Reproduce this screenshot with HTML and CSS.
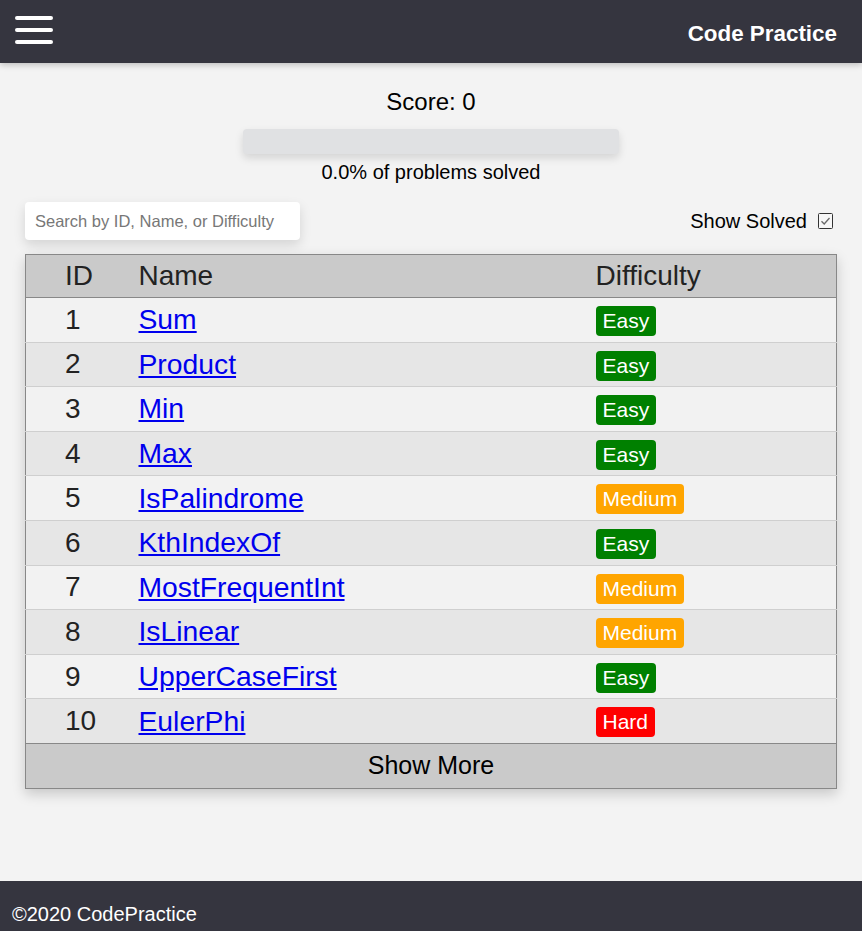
FILE: index.html
```html
<!DOCTYPE html>
<html lang="en">
<head>
<meta charset="utf-8">
<title>Code Practice</title>
<link rel="stylesheet" href="styles.css">
</head>
<body>
<div class="page">
  <header class="topbar">
    <button class="menu" aria-label="Menu">
      <span class="bar"></span><span class="bar"></span><span class="bar"></span>
    </button>
    <div class="brand">Code Practice</div>
  </header>
  <main class="main">
    <div class="score">Score: 0</div>
    <div class="progress"></div>
    <div class="percent">0.0% of problems solved</div>
    <div class="controls">
      <input class="search" type="text" placeholder="Search by ID, Name, or Difficulty">
      <label class="solved">Show Solved
        <svg class="check" width="15" height="16" viewBox="0 0 15 16"><rect x="0.5" y="0.5" width="14" height="15" rx="1" fill="#f7f7f7" stroke="#333" stroke-width="1"/><path d="M3.5 8.2 L6.2 11 L11.5 5" fill="none" stroke="#6a6a6a" stroke-width="1.3"/></svg>
      </label>
    </div>
    <table class="problems">
      <thead>
        <tr><th class="c-id">ID</th><th class="c-name">Name</th><th class="c-diff">Difficulty</th></tr>
      </thead>
      <tbody>
        <tr><td class="c-id">1</td><td class="c-name"><a href="#">Sum</a></td><td class="c-diff"><span class="badge easy">Easy</span></td></tr>
        <tr><td class="c-id">2</td><td class="c-name"><a href="#">Product</a></td><td class="c-diff"><span class="badge easy">Easy</span></td></tr>
        <tr><td class="c-id">3</td><td class="c-name"><a href="#">Min</a></td><td class="c-diff"><span class="badge easy">Easy</span></td></tr>
        <tr><td class="c-id">4</td><td class="c-name"><a href="#">Max</a></td><td class="c-diff"><span class="badge easy">Easy</span></td></tr>
        <tr><td class="c-id">5</td><td class="c-name"><a href="#">IsPalindrome</a></td><td class="c-diff"><span class="badge medium">Medium</span></td></tr>
        <tr><td class="c-id">6</td><td class="c-name"><a href="#">KthIndexOf</a></td><td class="c-diff"><span class="badge easy">Easy</span></td></tr>
        <tr><td class="c-id">7</td><td class="c-name"><a href="#">MostFrequentInt</a></td><td class="c-diff"><span class="badge medium">Medium</span></td></tr>
        <tr><td class="c-id">8</td><td class="c-name"><a href="#">IsLinear</a></td><td class="c-diff"><span class="badge medium">Medium</span></td></tr>
        <tr><td class="c-id">9</td><td class="c-name"><a href="#">UpperCaseFirst</a></td><td class="c-diff"><span class="badge easy">Easy</span></td></tr>
        <tr><td class="c-id">10</td><td class="c-name"><a href="#">EulerPhi</a></td><td class="c-diff"><span class="badge hard">Hard</span></td></tr>
      </tbody>
      <tfoot>
        <tr><td class="more" colspan="3">Show More</td></tr>
      </tfoot>
    </table>
  </main>
  <footer class="footer">©2020 CodePractice</footer>
</div>
</body>
</html>
```
FILE: styles.css
```css
* { box-sizing: border-box; }
html, body { margin: 0; padding: 0; }
body {
  background: #f3f3f3;
  font-family: "Liberation Sans", Arial, sans-serif;
  color: #000;
}
.page {
  min-height: 100vh;
  display: flex;
  flex-direction: column;
}
.topbar {
  height: 63px;
  background: #35353f;
  display: flex;
  align-items: center;
  justify-content: space-between;
  padding: 0 25px 0 15px;
  box-shadow: 0 2px 6px rgba(0,0,0,0.22);
  position: relative;
  z-index: 1;
}
.menu {
  background: none;
  border: 0;
  padding: 0;
  width: 38px;
  display: flex;
  flex-direction: column;
  gap: 8px;
  margin-top: -4px;
}
.bar {
  display: block;
  height: 4px;
  width: 38px;
  border-radius: 2px;
  background: #fff;
}
.brand {
  color: #fff;
  font-weight: bold;
  font-size: 22.4px;
  margin-top: 4px;
}
.main {
  flex: 1;
  padding: 25px 25px 80px;
  display: flex;
  flex-direction: column;
  align-items: center;
}
.score {
  font-size: 24px;
  line-height: 28px;
  height: 28px;
}
.progress {
  margin-top: 13px;
  width: 376px;
  height: 25px;
  background: #e0e1e3;
  border-radius: 4px;
  box-shadow: 0 4px 8px rgba(0,0,0,0.13);
}
.percent {
  margin-top: 7px;
  font-size: 20px;
  line-height: 23px;
}
.controls {
  margin-top: 18px;
  width: 100%;
  display: flex;
  justify-content: space-between;
  align-items: center;
}
.search {
  width: 275px;
  height: 38px;
  border: 0;
  border-radius: 4px;
  background: #fff;
  padding: 0 10px;
  font-family: "Liberation Sans", Arial, sans-serif;
  font-size: 16.5px;
  box-shadow: 0 5px 12px rgba(0,0,0,0.13);
  outline: none;
}
.search::placeholder { color: #777; }
.solved {
  font-size: 20px;
  display: flex;
  align-items: center;
  gap: 11px;
  margin-right: 4px;
  color: #000;
}
.check { display: block; }
.problems {
  margin-top: 14px;
  width: 100%;
  border-collapse: collapse;
  border: 1px solid #888;
  box-shadow: 0 5px 12px rgba(0,0,0,0.18);
  font-size: 28px;
  color: #222;
}
.problems th {
  background: #cacaca;
  font-weight: normal;
  text-align: left;
  height: 43px;
  border-bottom: 1px solid #888;
  padding: 0;
}
.problems td {
  height: 44.6px;
  padding: 0;
  border-top: 1px solid #cfcfcf;
}
.problems tbody tr:nth-child(odd) td { background: #f2f2f2; }
.problems tbody tr:nth-child(even) td { background: #e6e6e6; }
.problems tbody tr:first-child td { border-top: 0; }
.c-id { width: 113px; padding-left: 39px !important; }
.c-name { width: 457px; }
.problems a { color: #0000ee; font-size: 28.3px; }
.badge {
  display: inline-block;
  font-size: 21px;
  line-height: 30px;
  height: 30px;
  padding: 0 7px;
  border-radius: 4px;
  color: #fff;
  vertical-align: middle;
}
.easy { background: #008000; }
.medium { background: #ffa500; }
.hard { background: #ff0000; }
.problems td.more {
  background: #cacaca;
  text-align: center;
  font-size: 25px;
  color: #000;
  height: 45px;
  border-top: 1px solid #888;
}
.footer {
  height: 50px;
  background: #35353f;
  color: #fff;
  font-size: 20px;
  padding: 22px 12px 0;
  line-height: 22px;
}
```
